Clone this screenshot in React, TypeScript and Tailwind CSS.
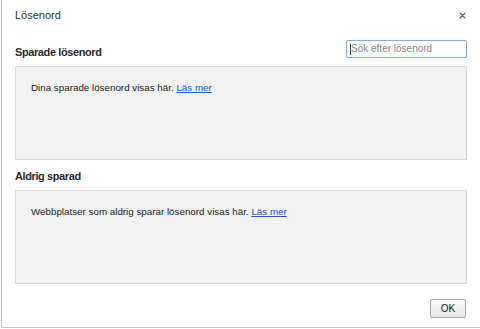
import React from "react";

const font = { fontFamily: '"Liberation Sans", Arial, sans-serif' };

function EmptyBox({ text }: { text: string }) {
  return (
    <div className="h-[94px] border border-[#dcdcdc] bg-[#f2f2f2] pl-[15px] pt-[14px]">
      <p className="text-[9.8px] leading-[13px] text-[#222]">
        {text}{" "}
        <a href="#" className="text-[#1a55c8] underline underline-offset-[1px]">
          Läs mer
        </a>
      </p>
    </div>
  );
}

export default function App() {
  return (
    <div className="w-[480px] h-[329px] bg-white" style={font}>
      <div className="ml-px h-[328px] border-l border-b border-[#c4c4c4] bg-white px-[13px] flex flex-col">
        {/* Title bar */}
        <div className="flex items-start justify-between pt-[8px]">
          <h1 className="text-[11px] leading-[14px] text-[#333]">Lösenord</h1>
          <button className="mt-[4px] mr-[1px] flex h-[7px] w-[7px] items-center justify-center">
            <svg width="7" height="7" viewBox="0 0 7 7">
              <path d="M1 1L6 6M6 1L1 6" stroke="#666" strokeWidth="1.1" strokeLinecap="round" />
            </svg>
          </button>
        </div>

        {/* Saved passwords */}
        <div className="mt-[18px] flex h-[18px] items-end justify-between">
          <h2 className="mb-[-1px] text-[11px] font-bold leading-[14px] tracking-[-0.4px] text-[#2a2a2a]">
            Sparade lösenord
          </h2>
          <div className="flex h-[18px] w-[121px] items-center rounded-[2px] border border-[#86abe2] bg-white pl-[3px] shadow-[0_0_1px_#a9c6f0]">
            <span className="h-[11px] w-px bg-[#444]" />
            <span className="text-[10px] leading-[12px] text-[#8a8a8a]">Sök efter lösenord</span>
          </div>
        </div>
        <div className="mt-[8px]">
          <EmptyBox text="Dina sparade lösenord visas här." />
        </div>

        {/* Never saved */}
        <h2 className="mt-[9px] text-[11px] font-bold leading-[14px] tracking-[-0.4px] text-[#2a2a2a]">
          Aldrig sparad
        </h2>
        <div className="mt-[7px]">
          <EmptyBox text="Webbplatser som aldrig sparar lösenord visas här." />
        </div>

        {/* Footer */}
        <div className="mt-[15px] flex justify-end pr-px">
          <button className="h-[19px] w-[36px] rounded-[2px] border border-[#a8a8a8] bg-gradient-to-b from-[#fafafa] to-[#e6e6e6] text-[10px] leading-[17px] text-[#222] shadow-[0_1px_0_rgba(0,0,0,0.05)]">
            OK
          </button>
        </div>
      </div>
    </div>
  );
}
